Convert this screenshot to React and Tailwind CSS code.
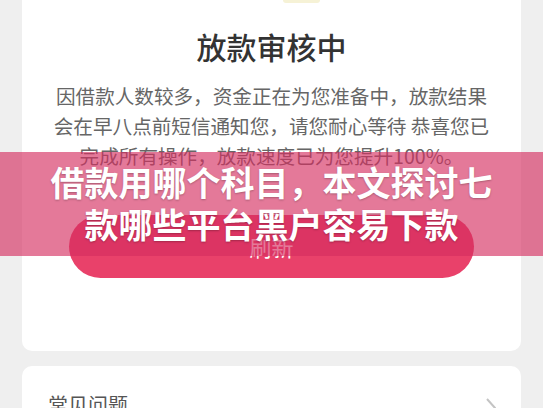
export default function App() {
  return (
    <div className="relative h-[408px] w-full overflow-hidden bg-[#efefef] px-[22px] font-['Noto_Sans_CJK_SC',sans-serif]">
      {/* status card */}
      <div className="rounded-b-[10px] bg-white pb-[73px]">
        <div className="ml-[261px] h-[3px] w-[37px] rounded-b-full bg-[#f6f2d6]" />
        <h1 className="mt-[23px] text-center text-[30px] leading-[40px] font-medium text-[#333]">放款审核中</h1>
        <div className="mt-[15px] text-center text-[19.6px] leading-[30px] whitespace-nowrap text-[#666]">
          <p>因借款人数较多，资金正在为您准备中，放款结果</p>
          <p>会在早八点前短信通知您，请您耐心等待 恭喜您已</p>
          <p>完成所有操作，放款速度已为您提升100%。</p>
        </div>
        <button className="mx-auto mt-[44px] flex h-[63px] w-[405px] items-center justify-center rounded-full bg-[#e9416a] text-[22px] text-white">
          刷新
        </button>
      </div>

      {/* faq card */}
      <div className="mt-[15px] flex items-center justify-between rounded-[10px] bg-white pt-[25px] pr-[25px] pb-[20px] pl-[26px]">
        <span className="text-[20px] leading-[28px] text-[#555]">常见问题</span>
        <svg width="10" height="20" viewBox="0 0 10 20" fill="none" className="mt-[6px]">
          <polyline points="1,1 9,10 1,19" stroke="#c4c4c4" strokeWidth="2" />
        </svg>
      </div>

      {/* title overlay */}
      <div className="absolute top-[152px] left-0 flex h-[104px] w-full items-center justify-center bg-[rgba(213,45,95,0.64)] pb-[2px]">
        <p className="text-center text-[34px] leading-[42px] font-bold whitespace-nowrap text-white [text-shadow:0_1px_2px_rgba(0,0,0,0.25)]">
          借款用哪个科目，本文探讨七
          <br />
          款哪些平台黑户容易下款
        </p>
      </div>
    </div>
  );
}
